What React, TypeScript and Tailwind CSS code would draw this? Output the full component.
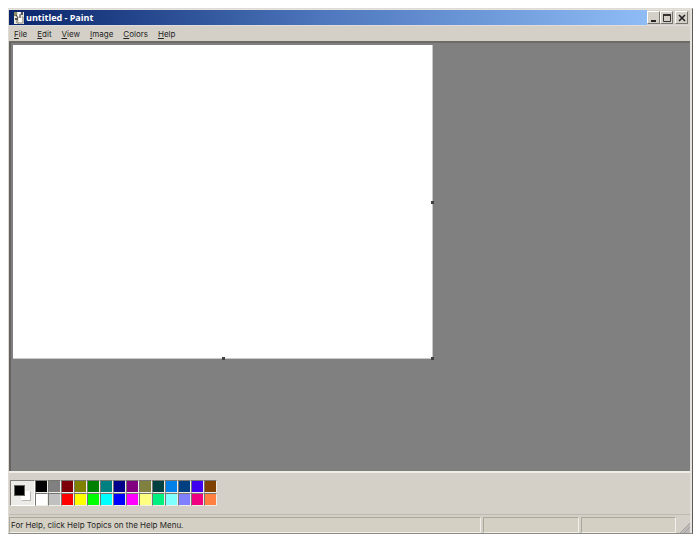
import { useState } from 'react';

const MENUS = ['File', 'Edit', 'View', 'Image', 'Colors', 'Help'];

const SWATCHES = [
  { name: 'Black', color: 'bg-[#000000]' },
  { name: 'Dark gray', color: 'bg-[#808080]' },
  { name: 'Maroon', color: 'bg-[#7d0008]' },
  { name: 'Olive', color: 'bg-[#808000]' },
  { name: 'Green', color: 'bg-[#008000]' },
  { name: 'Teal', color: 'bg-[#008080]' },
  { name: 'Navy', color: 'bg-[#00008a]' },
  { name: 'Purple', color: 'bg-[#800080]' },
  { name: 'Moss', color: 'bg-[#808040]' },
  { name: 'Dark teal', color: 'bg-[#004040]' },
  { name: 'Azure', color: 'bg-[#0080e8]' },
  { name: 'Steel', color: 'bg-[#004080]' },
  { name: 'Indigo', color: 'bg-[#4000f0]' },
  { name: 'Brown', color: 'bg-[#804000]' },
  { name: 'White', color: 'bg-[#ffffff]' },
  { name: 'Light gray', color: 'bg-[#c0c0c0]' },
  { name: 'Red', color: 'bg-[#ff0000]' },
  { name: 'Yellow', color: 'bg-[#ffff00]' },
  { name: 'Lime', color: 'bg-[#00ff00]' },
  { name: 'Cyan', color: 'bg-[#00ffff]' },
  { name: 'Blue', color: 'bg-[#0000ff]' },
  { name: 'Magenta', color: 'bg-[#ff00ff]' },
  { name: 'Pale yellow', color: 'bg-[#ffff80]' },
  { name: 'Spring green', color: 'bg-[#00f080]' },
  { name: 'Pale cyan', color: 'bg-[#80ffff]' },
  { name: 'Periwinkle', color: 'bg-[#8080ff]' },
  { name: 'Rose', color: 'bg-[#f00080]' },
  { name: 'Coral', color: 'bg-[#ff8040]' },
];

function PaintIcon() {
  return (
    <svg aria-hidden="true" className="h-3.5 w-3" viewBox="0 0 12 14">
      <path d="M1 1h10v12H1z" fill="#e9e7dc" />
      <path d="M1 1h3v4H1z" fill="#8f8c62" />
      <path d="M5 1h2v4H5z" fill="#ffffff" />
      <path d="M8 1h2v3H8z" fill="#4c5466" />
      <path d="M3 4l2 3M7 3v4" stroke="#303030" />
      <path d="M2 7h3v2H2z" fill="#55554d" />
      <path d="M3 9h2v3H3z" fill="#a6a48e" />
      <path d="M6 7h3v5H6z" fill="#fbfaf4" />
      <path d="M9 6h1v6H5v1" fill="none" stroke="#8b897c" />
    </svg>
  );
}

function TitleBar() {
  const button =
    'flex h-[13px] w-[13px] items-center justify-center border border-t-white border-l-white border-r-[#77756f] border-b-[#77756f] bg-[#d4d0c8]';

  return (
    <header className="flex h-4 border-b border-[#dedcdc] bg-[#d4d0c8]">
      <div className="flex flex-1 items-center bg-linear-to-r from-[#0a246a] via-[#4f78be] to-[#8fbcf5] pl-1">
        <PaintIcon />
        <h1 className="ml-px text-[9px] leading-3 font-bold text-white">
          untitled - Paint
        </h1>
      </div>
      <div className="flex items-center pr-0.5">
        <button aria-label="Minimize" className={button} type="button">
          <svg className="h-2.5 w-2.5" viewBox="0 0 10 10">
            <path d="M2 7h5v2H2z" fill="#222" />
          </svg>
        </button>
        <button aria-label="Maximize" className={button} type="button">
          <svg className="h-2.5 w-2.5" viewBox="0 0 10 10">
            <path d="M1 2h8M1.5 1v7.5h7V1" fill="none" stroke="#333" />
            <path d="M1 1h8v2H1z" fill="#333" />
          </svg>
        </button>
        <button aria-label="Close" className={`${button} ml-0.5`} type="button">
          <svg className="h-2.5 w-2.5" viewBox="0 0 10 10">
            <path d="M2 2l6 6M8 2L2 8" stroke="#222" strokeWidth="1.6" />
          </svg>
        </button>
      </div>
    </header>
  );
}

function MenuBar() {
  return (
    <nav className="flex h-[15px] items-center gap-2.5 pl-[5px]">
      {MENUS.map((menu) => (
        <button
          className="font-[Inter,sans-serif] text-[8px] leading-3"
          key={menu}
          type="button"
        >
          <span className="underline">{menu[0]}</span>
          {menu.slice(1)}
        </button>
      ))}
    </nav>
  );
}

function Workspace() {
  const handle = 'absolute h-[3px] w-[3px] bg-[#404040]';

  return (
    <main className="flex-1 border-t-2 border-l-2 border-t-[#6c6b66] border-l-[#64635f] bg-[#808080] pt-0.5 pl-0.5">
      <div className="relative aspect-[419/313] w-[62%] border-r border-b border-[#c8c8c8] bg-white">
        <span className={`${handle} top-1/2 -right-0.5`} />
        <span className={`${handle} -bottom-0.5 left-1/2`} />
        <span className={`${handle} -right-0.5 -bottom-0.5`} />
      </div>
    </main>
  );
}

function Palette() {
  const [selected, setSelected] = useState(SWATCHES[0]);

  return (
    <section
      aria-label="Color box"
      className="flex h-[43px] items-start border-t-2 border-[#efede8] pt-[7px] pl-px"
    >
      <div className="relative h-[26px] w-[25px] border border-t-[#807e79] border-l-[#807e79] border-r-white border-b-white bg-[#edebe8]">
        <span className="absolute top-2.5 left-2.5 h-2.5 w-2.5 border border-r-[#b8b6b0] border-b-[#b8b6b0] border-t-white border-l-white bg-white" />
        <span
          className={`absolute top-1 left-[3px] h-[11px] w-[11px] border border-[#68665f] ${selected.color}`}
        />
      </div>
      <div className="grid grid-cols-14">
        {SWATCHES.map((swatch) => (
          <button
            aria-label={swatch.name}
            className={`h-[13px] w-[13px] border border-t-[#77756f] border-l-[#77756f] border-r-[#efede8] border-b-[#efede8] ${swatch.color}`}
            key={swatch.name}
            onClick={() => setSelected(swatch)}
            type="button"
          />
        ))}
      </div>
    </section>
  );
}

function StatusBar() {
  const pane =
    'border border-t-[#aaa89a] border-l-[#aaa89a] border-r-[#f2f0ea] border-b-[#f2f0ea] bg-[#d4d0c4]';

  return (
    <footer className="flex h-[19px] gap-0.5 border-t border-[#bebab1] pt-0.5">
      <p
        className={`${pane} flex-1 pl-px font-[Inter,sans-serif] text-[8px] leading-[14px]`}
      >
        For Help, click Help Topics on the Help Menu.
      </p>
      <div className={`${pane} w-[14%]`} />
      <div className={`${pane} w-[14%]`} />
      <svg aria-hidden="true" className="h-4 w-3" viewBox="0 0 12 16">
        <path d="M2 16L12 6v10z" fill="#bcb9b8" />
        <path d="M2 16L12 6M6 16l6-6" stroke="#a5a2a0" />
      </svg>
    </footer>
  );
}

function App() {
  return (
    <div className="h-screen bg-white pt-2 pr-[3px] pl-2 font-['Open_Sans','Noto_Sans',sans-serif] text-[#25241f]">
      <div className="flex h-full flex-col border border-t-[#dedbd5] border-l-[#dedbd5] border-r-[#5d5b57] border-b-[#8e8b86] bg-[#d4d0c8]">
        <div className="flex flex-1 flex-col border-t border-r-2 border-[#e6e3de]">
          <TitleBar />
          <MenuBar />
          <Workspace />
          <Palette />
          <StatusBar />
        </div>
      </div>
    </div>
  );
}

export default App;
